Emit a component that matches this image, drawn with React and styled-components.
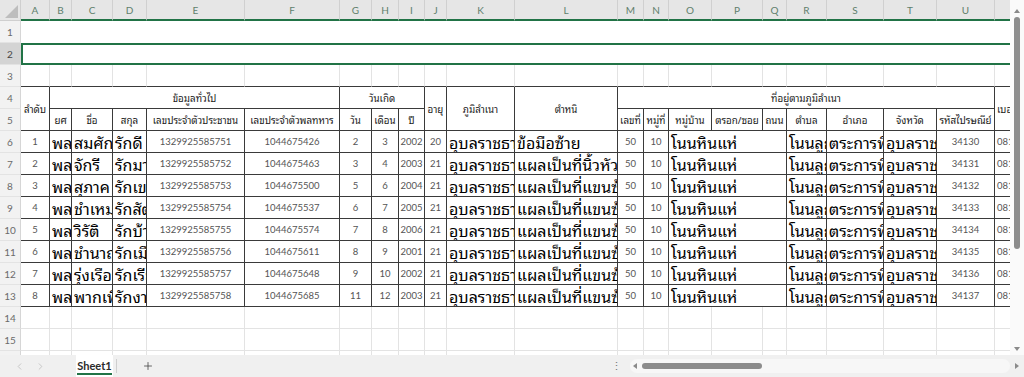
import styled, { createGlobalStyle } from "styled-components";
import { ChevronLeft, ChevronRight, Plus } from "lucide-react";

const GlobalStyle = createGlobalStyle`
  html, body {
    margin: 0;
    padding: 0;
    background: #ffffff;
    overflow: hidden;
  }
  body {
    font-family: Lato, "Liberation Sans", sans-serif;
  }
`;

const THAI = `"Noto Sans Thai Looped", "Noto Sans Thai", "Noto Sans", Tahoma, "DejaVu Sans", sans-serif`;
const GREEN = "#217346";

const COLS = [
  ["A", 29], ["B", 22], ["C", 41], ["D", 34], ["E", 98], ["F", 95],
  ["G", 32], ["H", 27], ["I", 26], ["J", 22], ["K", 68], ["L", 103],
  ["M", 26], ["N", 25], ["O", 43], ["P", 51], ["Q", 24], ["R", 40],
  ["S", 57], ["T", 53], ["U", 58], ["V", 70],
];

const Frame = styled.div`
  width: 1024px;
  height: 377px;
  display: flex;
  flex-direction: column;
  background: #ffffff;
`;

const Main = styled.div`
  flex: 1;
  display: flex;
  min-height: 0;
`;

const Sheet = styled.div`
  width: 1010px;
  height: 355px;
  overflow: hidden;
  display: grid;
  grid-template-columns: 21px ${COLS.map((c) => c[1] + "px").join(" ")};
  grid-template-rows: 21px;
  grid-auto-rows: 22px;
  align-content: start;
`;

const Corner = styled.div`
  background: #e6e6e6;
  border-right: 1px solid #cfcfcf;
  border-bottom: 1px solid #cfcfcf;
  box-sizing: border-box;
  display: flex;
  align-items: flex-end;
  justify-content: flex-end;
  padding: 0 2px 2px 0;
`;

const ColHead = styled.div`
  background: #e6e6e6;
  border-right: 1px solid #d0d0d0;
  border-bottom: 2px solid ${GREEN};
  box-sizing: border-box;
  color: #5f7f6c;
  font-size: 10px;
  display: flex;
  align-items: center;
  justify-content: center;
`;

const RowHead = styled.div`
  grid-column: 1;
  background: ${(p) => (p.$sel ? "#d4d4d4" : "#f2f2f2")};
  border-right: 1px solid #d6d6d6;
  border-bottom: 1px solid #e3e3e3;
  box-sizing: border-box;
  color: ${(p) => (p.$sel ? "#444" : "#6a6a6a")};
  font-size: 10px;
  display: flex;
  align-items: center;
  justify-content: center;
`;

const Band = styled.div`
  grid-column: span ${COLS.length};
  box-sizing: border-box;
  border-top: ${(p) => (p.$sel ? `2px solid ${GREEN}` : "none")};
  border-bottom: ${(p) => (p.$sel ? `2px solid ${GREEN}` : "none")};
  border-left: ${(p) => (p.$sel ? `2px solid ${GREEN}` : "none")};
`;

const Blank = styled.div`
  box-sizing: border-box;
  border-right: 1px solid #e3e3e3;
  border-bottom: 1px solid ${(p) => (p.$edge ? "#3a3a3a" : "#e3e3e3")};
`;

const KIND = {
  big: `font-family: ${THAI}; font-size: 16px; color: #000;`,
  num: `font-family: Lato, "Liberation Sans", sans-serif; font-size: 9.5px; color: #555;`,
  head: `font-family: ${THAI}; font-size: 9.8px; color: #1a1a1a;`,
};

const Cell = styled.div`
  grid-column: span ${(p) => p.$cs || 1};
  grid-row: span ${(p) => p.$rs || 1};
  box-sizing: border-box;
  border-right: 1px solid #3a3a3a;
  border-bottom: 1px solid #3a3a3a;
  display: flex;
  align-items: center;
  justify-content: ${(p) => (p.$align === "left" ? "flex-start" : "center")};
  padding: 0 2px;
  overflow: hidden;
  white-space: nowrap;
  line-height: 1;
  ${(p) => KIND[p.$kind || "num"]}
`;

const VScroll = styled.div`
  width: 14px;
  height: 355px;
  background: #fafafa;
  display: flex;
  flex-direction: column;
  align-items: center;
  padding: 9px 0 4px;
  box-sizing: border-box;
`;

const VThumb = styled.div`
  width: 6px;
  height: 232px;
  margin-top: 4px;
  border-radius: 3px;
  background: #8c8c8c;
`;

const Fill = styled.div`
  flex: 1;
`;

const TabBar = styled.div`
  height: 22px;
  background: #f0f0f0;
  display: flex;
  align-items: stretch;
  padding-left: 9px;
`;

const NavBtn = styled.div`
  width: 21px;
  display: flex;
  align-items: center;
  justify-content: center;
  color: #b5b5b5;
`;

const Tab = styled.div`
  margin-left: 25px;
  width: 37px;
  background: #ffffff;
  display: flex;
  flex-direction: column;
  align-items: center;
  justify-content: center;
  font-size: 11px;
  font-weight: 700;
  color: #2b2b2b;
  span {
    border-bottom: 2px solid ${GREEN};
    padding-bottom: 1px;
    margin-top: 2px;
  }
`;

const Sep = styled.div`
  width: 1px;
  margin: 4px 0 4px 3px;
  background: #cfcfcf;
`;

const AddBtn = styled.div`
  margin-left: 22px;
  width: 18px;
  display: flex;
  align-items: center;
  justify-content: center;
  color: #444;
`;

const Dots = styled.div`
  width: 10px;
  margin-right: 6px;
  display: flex;
  align-items: center;
  justify-content: center;
  color: #777;
  font-size: 11px;
`;

const HScroll = styled.div`
  width: 397px;
  display: flex;
  align-items: center;
  padding: 0 0 0 3px;
  box-sizing: border-box;
`;

const HTrack = styled.div`
  width: 380px;
  height: 14px;
  border-radius: 7px;
  background: #f7f7f7;
  display: flex;
  align-items: center;
  padding: 0 3px;
  box-sizing: border-box;
`;

const HThumb = styled.div`
  width: 120px;
  height: 6px;
  margin-left: 5px;
  border-radius: 3px;
  background: #8c8c8c;
`;

const Tri = ({ dir }) => {
  const pts = {
    up: "0,4 3,0 6,4",
    down: "0,0 6,0 3,4",
    left: "4,0 4,6 0,3",
    right: "0,0 4,3 0,6",
  }[dir];
  const v = dir === "up" || dir === "down";
  return (
    <svg width={v ? 6 : 4} height={v ? 4 : 6} viewBox={v ? "0 0 6 4" : "0 0 4 6"}>
      <polygon points={pts} fill="#8a8a8a" />
    </svg>
  );
};

const PEOPLE = [
  ["สมศักดิ์", "รักดี", 2, 3, 2002, 20, "ข้อมือซ้าย"],
  ["จักรี", "รักมาตุภูมิ", 3, 4, 2003, 21, "แผลเป็นที่นิ้วหัวแม่มือ"],
  ["สุภาค", "รักเขาใหญ่", 5, 6, 2004, 21, "แผลเป็นที่แขนซ้าย"],
  ["ชำเหมาะ", "รักสัตว์", 6, 7, 2005, 21, "แผลเป็นที่แขนซ้าย"],
  ["วิรัติ", "รักบ้าน", 7, 8, 2006, 21, "แผลเป็นที่แขนซ้าย"],
  ["ชำนาญ", "รักเมือง", 8, 9, 2001, 21, "แผลเป็นที่แขนซ้าย"],
  ["รุ่งเรือง", "รักเรียน", 9, 10, 2002, 21, "แผลเป็นที่แขนซ้าย"],
  ["พากเพียร", "รักงาน", 11, 12, 2003, 21, "แผลเป็นที่แขนซ้าย"],
];

const SUB_LEFT = ["ยศ", "ชื่อ", "สกุล", "เลขประจำตัวประชาชน", "เลขประจำตัวพลทหาร", "วัน", "เดือน", "ปี"];
const SUB_RIGHT = ["เลขที่", "หมู่ที่", "หมู่บ้าน", "ตรอก/ซอย", "ถนน", "ตำบล", "อำเภอ", "จังหวัด", "รหัสไปรษณีย์"];

const blanks = (row, edge) =>
  COLS.map((c) => <Blank key={row + c[0]} $edge={edge} />);

const DataRow = ({ n, p }) => {
  const [first, last, d, m, y, age, scar] = p;
  const big = (text) => (
    <Cell $kind="big" $align="left">
      {text}
    </Cell>
  );
  const num = (text) => <Cell>{text}</Cell>;
  return (
    <>
      <RowHead>{n + 6}</RowHead>
      {num(n + 1)}
      {big("พลทหาร")}
      {big(first)}
      {big(last)}
      {num("13299255857" + (51 + n))}
      {num(1044675426 + 37 * n)}
      {num(d)}
      {num(m)}
      {num(y)}
      {num(age)}
      {big("อุบลราชธานี")}
      {big(scar)}
      {num(50)}
      {num(10)}
      <Cell $kind="big" $align="left" $cs={3}>
        โนนหินแห่
      </Cell>
      {big("โนนลูกหิน")}
      {big("ตระการพืชผล")}
      {big("อุบลราชธานี")}
      {num(34130 + n)}
      <Cell $align="left">08{String(12345670 + n)}</Cell>
    </>
  );
};

export default function App() {
  return (
    <>
      <GlobalStyle />
      <Frame>
        <Main>
          <Sheet>
            <Corner>
              <svg width="13" height="13" viewBox="0 0 13 13">
                <polygon points="13,0 13,13 0,13" fill="#bdbdbd" />
              </svg>
            </Corner>
            {COLS.map((c) => (
              <ColHead key={c[0]}>{c[0]}</ColHead>
            ))}

            <RowHead>1</RowHead>
            <Band />
            <RowHead $sel>2</RowHead>
            <Band $sel />
            <RowHead>3</RowHead>
            {blanks("r3", true)}

            <RowHead>4</RowHead>
            <Cell $kind="head" $rs={2}>ลำดับ</Cell>
            <Cell $kind="head" $cs={5}>ข้อมูลทั่วไป</Cell>
            <Cell $kind="head" $cs={3}>วันเกิด</Cell>
            <Cell $kind="head" $rs={2}>อายุ</Cell>
            <Cell $kind="head" $rs={2}>ภูมิลำเนา</Cell>
            <Cell $kind="head" $rs={2}>ตำหนิ</Cell>
            <Cell $kind="head" $cs={9}>ที่อยู่ตามภูมิลำเนา</Cell>
            <Cell $kind="head" $rs={2} $align="left">เบอร์โทรศัพท์</Cell>

            <RowHead>5</RowHead>
            {SUB_LEFT.map((t) => (
              <Cell key={t} $kind="head">{t}</Cell>
            ))}
            {SUB_RIGHT.map((t) => (
              <Cell key={t} $kind="head">{t}</Cell>
            ))}

            {PEOPLE.map((p, i) => (
              <DataRow key={i} n={i} p={p} />
            ))}

            <RowHead>14</RowHead>
            {blanks("r14")}
            <RowHead>15</RowHead>
            {blanks("r15")}
            <RowHead>16</RowHead>
            {blanks("r16")}
          </Sheet>
          <VScroll>
            <Tri dir="up" />
            <VThumb />
            <Fill />
            <Tri dir="down" />
          </VScroll>
        </Main>
        <TabBar>
          <NavBtn>
            <ChevronLeft size={11} strokeWidth={1.5} />
          </NavBtn>
          <NavBtn>
            <ChevronRight size={11} strokeWidth={1.5} />
          </NavBtn>
          <Tab>
            <span>Sheet1</span>
          </Tab>
          <Sep />
          <AddBtn>
            <Plus size={12} strokeWidth={1.6} />
          </AddBtn>
          <Fill />
          <Dots>⋮</Dots>
          <HScroll>
            <HTrack>
              <Tri dir="left" />
              <HThumb />
            </HTrack>
            <Fill />
            <Tri dir="right" />
            <Fill />
          </HScroll>
        </TabBar>
      </Frame>
    </>
  );
}
